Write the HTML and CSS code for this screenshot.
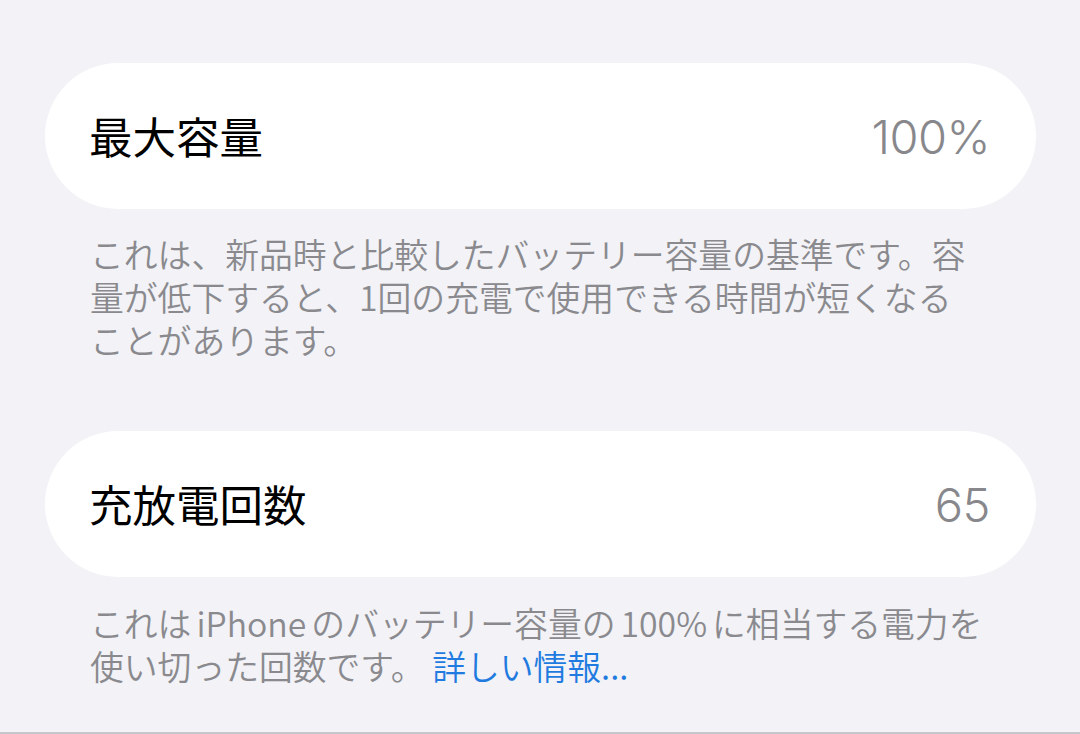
FILE: index.html
```html
<!DOCTYPE html>
<html lang="ja">
<head>
<meta charset="utf-8">
<title>バッテリーの状態</title>
<link rel="stylesheet" href="styles.css">
</head>
<body>
<div class="screen">
  <section class="group group-first">
    <div class="cell">
      <span class="label">最大容量</span>
      <span class="value">100%</span>
    </div>
    <p class="footer">これは、新品時と比較したバッテリー容量の基準です。容<br>量が低下すると、1回の充電で使用できる時間が短くなる<br>ことがあります。</p>
  </section>
  <section class="group group-second">
    <div class="cell">
      <span class="label">充放電回数</span>
      <span class="value">65</span>
    </div>
    <p class="footer">これは<span class="latin">iPhone</span>のバッテリー容量の<span class="latin">100%</span>に相当する電力を<br>使い切った回数です。 <a class="link" href="#">詳しい情報...</a></p>
  </section>
</div>
</body>
</html>
```

FILE: styles.css
```css
* {
  box-sizing: border-box;
}

html, body {
  margin: 0;
  padding: 0;
  background: #f2f2f7;
}

body {
  font-family: "Noto Sans CJK JP", "Noto Sans", sans-serif;
  width: 1080px;
  height: 734px;
  overflow: hidden;
}

.screen {
  height: 734px;
  padding: 63px 44px 0 45px;
  border-bottom: 2px solid #c6c6cb;
  display: flex;
  flex-direction: column;
}

.group-second {
  margin-top: 70px;
}

.cell {
  height: 146px;
  background: #ffffff;
  border-radius: 73px;
  display: flex;
  align-items: center;
  justify-content: space-between;
  padding: 0 46px 0 44px;
}

.label {
  font-size: 43.5px;
  color: #000000;
  line-height: 1;
}

.value {
  font-family: "Inter", "Noto Sans CJK JP", sans-serif;
  font-size: 47px;
  font-weight: 300;
  color: #88888c;
  line-height: 1;
  letter-spacing: -0.5px;
}

.footer {
  margin: 0;
  padding: 23px 0 0 45px;
  font-size: 33.8px;
  font-weight: 350;
  line-height: 43px;
  color: #8a8a8e;
  white-space: nowrap;
}

.group-second .footer {
  padding-top: 24px;
}

.latin {
  margin: 0 5px;
}

.link {
  color: #1f7be0;
  text-decoration: none;
}
```
